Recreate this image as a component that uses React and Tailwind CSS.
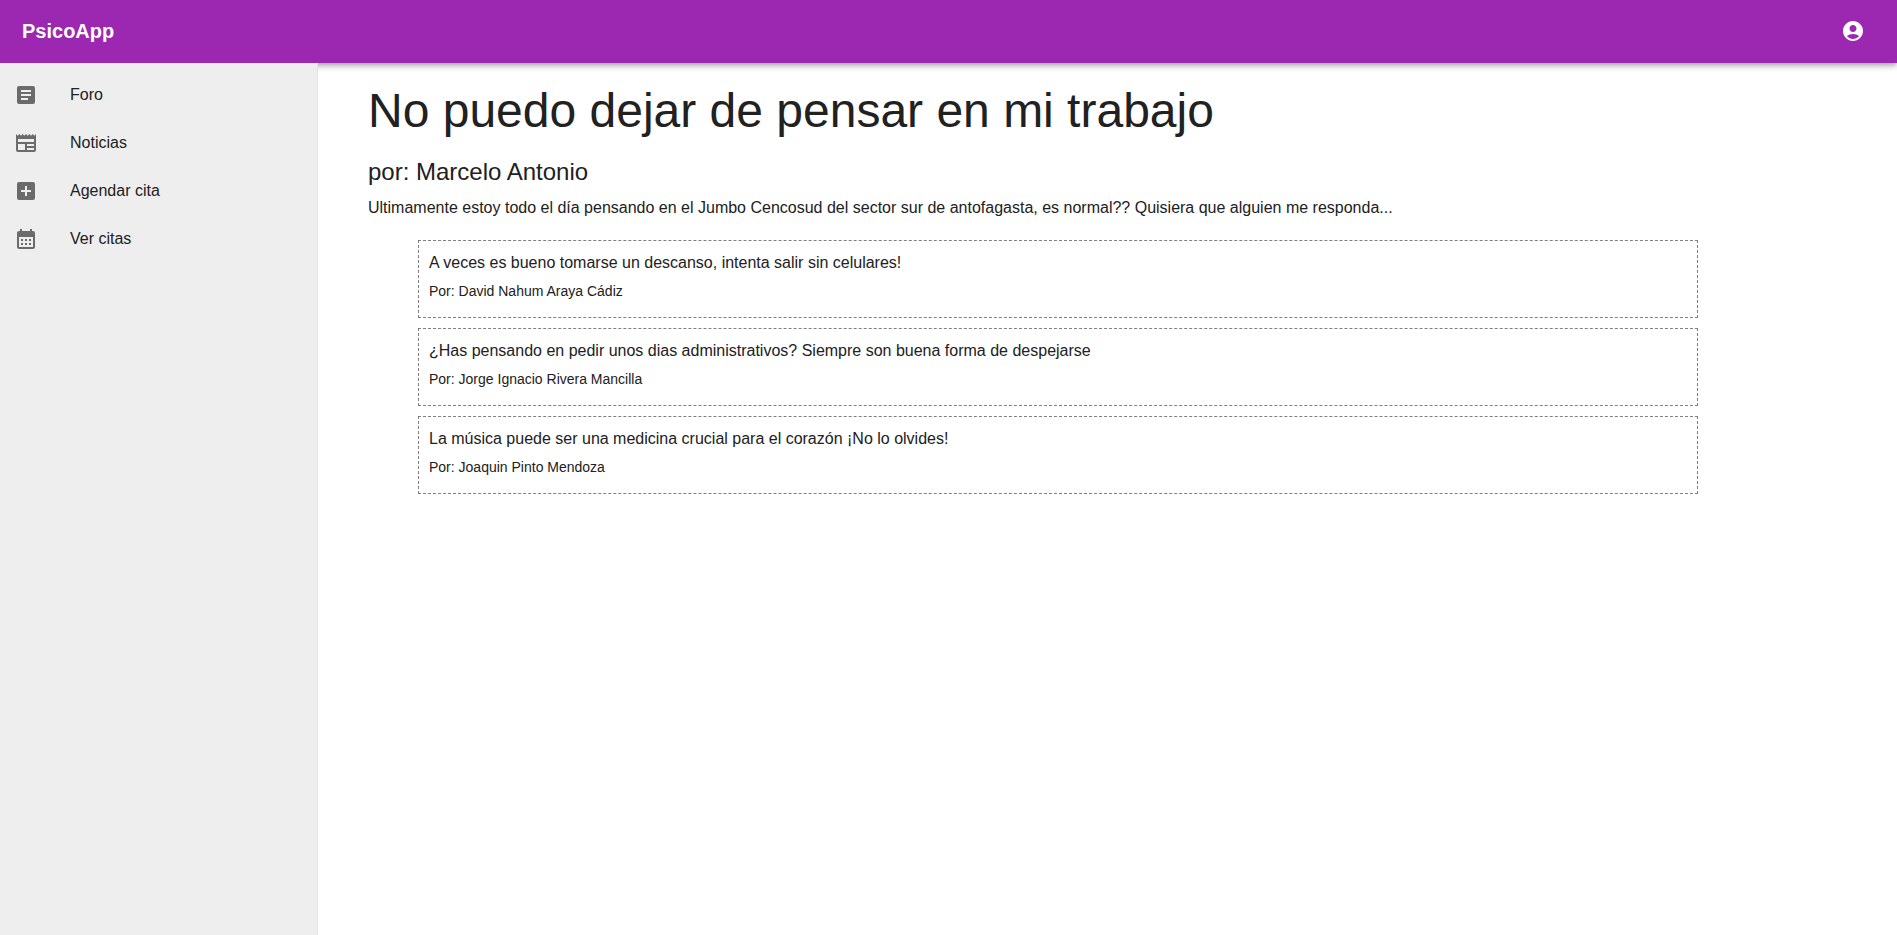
import { MdArticle, MdNewspaper, MdAddBox, MdCalendarMonth } from "react-icons/md";

const navItems = [
  { label: "Foro", href: "#foro", Icon: MdArticle },
  { label: "Noticias", href: "#noticias", Icon: MdNewspaper },
  { label: "Agendar cita", href: "#agendar", Icon: MdAddBox },
  { label: "Ver citas", href: "#citas", Icon: MdCalendarMonth },
];

const answers = [
  {
    text: "A veces es bueno tomarse un descanso, intenta salir sin celulares!",
    author: "David Nahum Araya Cádiz",
  },
  {
    text: "¿Has pensando en pedir unos dias administrativos? Siempre son buena forma de despejarse",
    author: "Jorge Ignacio Rivera Mancilla",
  },
  {
    text: "La música puede ser una medicina crucial para el corazón ¡No lo olvides!",
    author: "Joaquin Pinto Mendoza",
  },
];

function AccountIcon() {
  return (
    <svg viewBox="0 0 24 24" className="size-6 fill-current" aria-hidden="true">
      <path d="M12 2C6.48 2 2 6.48 2 12s4.48 10 10 10 10-4.48 10-10S17.52 2 12 2zm0 4c1.93 0 3.5 1.57 3.5 3.5S13.93 13 12 13s-3.5-1.57-3.5-3.5S10.07 6 12 6zm0 14c-2.03 0-4.43-.82-6.14-2.88C7.55 15.8 9.68 15 12 15s4.45.8 6.14 2.12C16.43 19.18 14.03 20 12 20z" />
    </svg>
  );
}

function Header() {
  return (
    <header className="flex h-[63px] items-center justify-between bg-[#9c27b0] pr-8 pb-0.5 pl-[22px] text-white shadow-[0_2px_4px_-1px_rgba(0,0,0,0.2),0_4px_5px_0_rgba(0,0,0,0.14),0_1px_10px_0_rgba(0,0,0,0.12)]">
      <a href="#inicio" className="text-xl font-bold">
        PsicoApp
      </a>
      <button type="button" aria-label="Cuenta">
        <AccountIcon />
      </button>
    </header>
  );
}

function Sidebar() {
  return (
    <nav className="relative w-[318px] shrink-0 border-r border-[#e4e4e4] bg-[#eeeeee] pt-2">
      <ul>
        {navItems.map(({ label, href, Icon }) => (
          <li key={label}>
            <a href={href} className="flex h-12 items-center gap-8 px-3.5 text-base">
              <Icon className="size-6 text-[#6b6b6b]" aria-hidden="true" />
              <span>{label}</span>
            </a>
          </li>
        ))}
      </ul>
    </nav>
  );
}

function Answer({ text, author }) {
  return (
    <li className="border border-dashed border-[#808080] px-2.5 pt-2.5 pb-4">
      <p className="text-base">{text}</p>
      <p className="mt-1.5 text-sm">Por: {author}</p>
    </li>
  );
}

export default function App() {
  return (
    <div className="flex min-h-screen flex-col bg-white font-['Liberation_Sans',Arial,sans-serif] text-[#212121]">
      <Header />
      <div className="flex grow">
        <Sidebar />
        <main className="min-w-0 grow px-[50px] pt-5">
          <h1 className="text-5xl leading-14">No puedo dejar de pensar en mi trabajo</h1>
          <h2 className="mt-[17px] text-2xl">por: Marcelo Antonio</h2>
          <p className="mt-2 text-base">
            Ultimamente estoy todo el día pensando en el Jumbo Cencosud del sector sur de antofagasta, es normal??
            Quisiera que alguien me responda...
          </p>
          <ul className="mt-5 ml-[50px] flex max-w-[1280px] flex-col gap-2.5">
            {answers.map((answer) => (
              <Answer key={answer.author} {...answer} />
            ))}
          </ul>
        </main>
      </div>
    </div>
  );
}
